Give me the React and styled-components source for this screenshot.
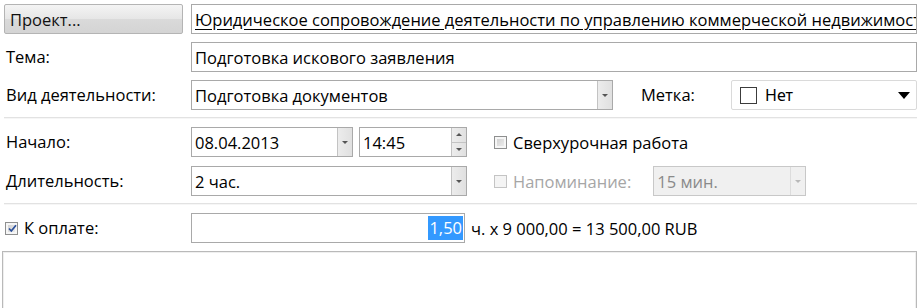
import React from "react";
import styled, { createGlobalStyle } from "styled-components";

const Global = createGlobalStyle`
  html, body { margin: 0; padding: 0; background: #fff; }
  body { font-family: "Open Sans", "Noto Sans", sans-serif; font-size: 16.5px; color: #000; }
  * { box-sizing: border-box; }
`;

const Page = styled.div`
  width: 922px;
  height: 308px;
  overflow: hidden;
  padding: 4px 5px 0 2px;
  background: #fff;
`;

const Row = styled.div`
  display: flex;
  align-items: center;
  height: 30px;
  margin-bottom: ${(p) => p.$mb ?? 8}px;
  padding-left: 2px;
`;

const Label = styled.div`
  width: ${(p) => p.$w ?? 187}px;
  flex: none;
  padding-left: ${(p) => p.$pl ?? 2}px;
  white-space: nowrap;
  line-height: 30px;
`;

const ProjectButton = styled.button`
  width: 179px;
  height: 30px;
  margin-right: 8px;
  flex: none;
  font: inherit;
  text-align: left;
  padding: 0 0 0 5px;
  color: #111;
  border: 1px solid #b4b4b4;
  border-radius: 2px;
  background: linear-gradient(#f4f4f4, #e6e6e6 50%, #dadada 51%, #d4d4d4);
`;

const Field = styled.div`
  position: relative;
  display: flex;
  align-items: center;
  height: 30px;
  width: ${(p) => (p.$w ? `${p.$w}px` : "auto")};
  flex: ${(p) => (p.$w ? "none" : "1 1 auto")};
  min-width: 0;
  border: 1px solid ${(p) => (p.$disabled ? "#c8c8c8" : "#a9a9a9")};
  background: ${(p) => (p.$disabled ? "#f0f0f0" : "#fff")};
  color: ${(p) => (p.$disabled ? "#8a8a8a" : "#000")};
  padding-left: 3px;
  justify-content: ${(p) => (p.$right ? "flex-end" : "flex-start")};
  white-space: nowrap;
  overflow: hidden;
  margin-left: ${(p) => p.$ml ?? 0}px;
`;

const FieldText = styled.span`
  flex: 1 1 auto;
  overflow: hidden;
  white-space: nowrap;
  text-decoration: ${(p) => (p.$link ? "underline" : "none")};
  text-underline-offset: 3px;
`;

const DropButton = styled.div`
  flex: none;
  width: 15px;
  height: 100%;
  border-left: 1px solid ${(p) => (p.$disabled ? "#dcdcdc" : "#c3c3c3")};
  background: ${(p) =>
    p.$disabled ? "#f0f0f0" : "linear-gradient(90deg, #ececec, #e0e0e0)"};
  display: flex;
  align-items: center;
  justify-content: center;
  &::after {
    content: "";
    border-left: 3px solid transparent;
    border-right: 3px solid transparent;
    border-top: 3px solid ${(p) => (p.$disabled ? "#b8b8b8" : "#555")};
  }
`;

const Spinner = styled.div`
  flex: none;
  width: 15px;
  height: 100%;
  border-left: 1px solid #c3c3c3;
  display: flex;
  flex-direction: column;
`;

const SpinHalf = styled.div`
  flex: 1;
  background: linear-gradient(90deg, #ededed, #e0e0e0);
  display: flex;
  align-items: center;
  justify-content: center;
  border-top: ${(p) => (p.$down ? "1px solid #c3c3c3" : "none")};
  &::after {
    content: "";
    border-left: 3px solid transparent;
    border-right: 3px solid transparent;
    ${(p) =>
      p.$down ? "border-top: 3px solid #555;" : "border-bottom: 3px solid #555;"}
  }
`;

const TagSelect = styled.div`
  display: flex;
  align-items: center;
  width: 186px;
  height: 30px;
  margin-left: auto;
  border: 1px solid #dadada;
  border-radius: 2px;
  padding: 0 6px 0 8px;
  gap: 8px;
  font-family: "Noto Sans", sans-serif;
  font-size: 16px;
`;

const TagBox = styled.span`
  width: 17px;
  height: 17px;
  border: 1px solid #3c3c3c;
  flex: none;
`;

const TagArrow = styled.span`
  margin-left: auto;
  border-left: 6px solid transparent;
  border-right: 6px solid transparent;
  border-top: 7px solid #000;
`;

const Check = styled.label`
  display: flex;
  align-items: center;
  gap: 6px;
  margin-left: ${(p) => p.$ml ?? 0}px;
  color: ${(p) => (p.$disabled ? "#a6a6a6" : "#000")};
  white-space: nowrap;
  flex: none;
`;

const Box = styled.span`
  position: relative;
  width: 13px;
  height: 13px;
  flex: none;
  border: 1px solid ${(p) => (p.$disabled ? "#c4c4c4" : "#8e8f8f")};
  background: ${(p) =>
    p.$disabled
      ? "#f4f4f4"
      : "linear-gradient(135deg, #cbcbcb, #f2f2f2)"};
  box-shadow: inset 0 0 0 2px ${(p) => (p.$disabled ? "#f4f4f4" : "#f6f6f6")};
  svg {
    position: absolute;
    left: 1px;
    top: 0px;
  }
`;

const Separator = styled.div`
  height: 2px;
  border-top: 1px solid #e2e2e2;
  border-bottom: 1px solid #f6f6f6;
  margin: 0 0 8px 2px;
`;

const Selected = styled.span`
  background: #3399ff;
  color: #fff;
  padding: 0 1px;
  line-height: 24px;
  margin-right: 1px;
`;

const Formula = styled.span`
  margin-left: 6px;
  white-space: nowrap;
`;

const Notes = styled.div`
  margin-top: 2px;
  height: 60px;
  border: 1px solid #b9b9b9;
  box-shadow: inset 0 0 0 1px #efefef;
  background: #fff;
`;

const Checkmark = () => (
  <svg width="11" height="11" viewBox="0 0 11 11">
    <path d="M2 5.5 L4.3 8 L9 2.2" fill="none" stroke="#2a4f9a" strokeWidth="1.7" />
  </svg>
);

export default function App() {
  return (
    <>
      <Global />
      <Page>
        <Row>
          <ProjectButton>Проект...</ProjectButton>
          <Field>
            <FieldText $link>
              Юридическое сопровождение деятельности по управлению коммерческой недвижимости
            </FieldText>
          </Field>
        </Row>
        <Row>
          <Label>Тема:</Label>
          <Field>
            <FieldText>Подготовка искового заявления</FieldText>
          </Field>
        </Row>
        <Row $mb={7}>
          <Label>Вид деятельности:</Label>
          <Field $w={422}>
            <FieldText>Подготовка документов</FieldText>
            <DropButton />
          </Field>
          <Label $w={90} $pl={28}>Метка:</Label>
          <TagSelect>
            <TagBox />
            <span>Нет</span>
            <TagArrow />
          </TagSelect>
        </Row>
        <Separator />
        <Row $mb={9}>
          <Label>Начало:</Label>
          <Field $w={162}>
            <FieldText>08.04.2013</FieldText>
            <DropButton />
          </Field>
          <Field $w={108} $ml={6}>
            <FieldText>14:45</FieldText>
            <Spinner>
              <SpinHalf />
              <SpinHalf $down />
            </Spinner>
          </Field>
          <Check $ml={27}>
            <Box />
            Сверхурочная работа
          </Check>
        </Row>
        <Row $mb={7}>
          <Label>Длительность:</Label>
          <Field $w={276}>
            <FieldText>2 час.</FieldText>
            <DropButton />
          </Field>
          <Check $ml={27} $disabled>
            <Box $disabled />
            Напоминание:
          </Check>
          <Field $w={153} $ml={22} $disabled>
            <FieldText>15 мин.</FieldText>
            <DropButton $disabled />
          </Field>
        </Row>
        <Separator />
        <Row $mb={8}>
          <Label $pl={1}>
            <Check>
              <Box>
                <Checkmark />
              </Box>
              К оплате:
            </Check>
          </Label>
          <Field $w={274} $right>
            <Selected>1,50</Selected>
          </Field>
          <Formula>ч. x 9 000,00 = 13 500,00 RUB</Formula>
        </Row>
        <Notes />
      </Page>
    </>
  );
}
